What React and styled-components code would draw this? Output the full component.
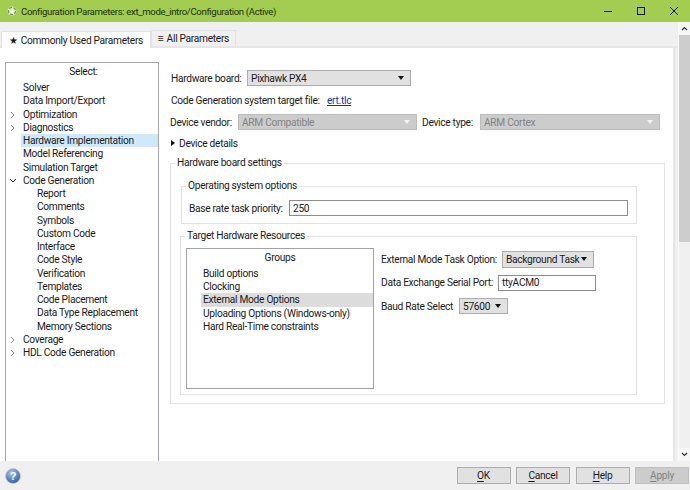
import React from 'react'
import styled, { createGlobalStyle } from 'styled-components'

const GlobalStyle = createGlobalStyle`
  html, body { margin: 0; padding: 0; background: #f0f0f0; }
  body { font-family: Roboto, "Noto Sans", sans-serif; font-size: 10.2px; letter-spacing: -0.3px; color: #1a1a1a; }
`

const Window = styled.div`
  width: 690px;
  height: 490px;
  display: flex;
  flex-direction: column;
  overflow: hidden;
  background: #f0f0f0;
`

const TitleBar = styled.div`
  height: 22px;
  flex: none;
  display: flex;
  align-items: center;
  background: #a2cd50;
  padding-left: 6px;
  gap: 3px;
`
const TitleText = styled.span`
  flex: 1;
  color: #20300c;
  font-size: 9.6px;
  letter-spacing: -0.35px;
`
const WinButtons = styled.div`
  display: flex;
  align-items: center;
`
const WinButton = styled.div`
  width: 33px;
  height: 22px;
  display: flex;
  align-items: center;
  justify-content: center;
  svg { display: block; }
`

const Middle = styled.div`
  flex: 1;
  display: flex;
  min-height: 0;
`
const Main = styled.div`
  flex: 1;
  display: flex;
  flex-direction: column;
  min-width: 0;
`
const TabBar = styled.div`
  height: 26px;
  flex: none;
  display: flex;
  align-items: flex-end;
  padding-left: 1px;
  box-sizing: border-box;
  border-bottom: 2px solid #e6e6e6;
`
const Tab = styled.div`
  box-sizing: border-box;
  width: ${p => p.$w}px;
  height: ${p => (p.$active ? 17 : 16)}px;
  margin-bottom: ${p => (p.$active ? -2 : 0)}px;
  display: flex;
  align-items: center;
  justify-content: center;
  gap: 3px;
  background: ${p => (p.$active ? '#fff' : '#f0f0f0')};
  border: 1px solid #e2e2e2;
  border-bottom: none;
  white-space: nowrap;
`
const Body = styled.div`
  flex: 1;
  display: flex;
  min-height: 0;
  background: #fff;
  margin-right: 3px;
  border-right: 2px solid #e6e6e6;
  padding-left: 5px;
`
const Tree = styled.div`
  width: 154px;
  flex: none;
  box-sizing: border-box;
  margin-top: 14px;
  border: 1px solid #a5a8ae;
  border-bottom: none;
  padding-top: 2px;
`
const TreeHeader = styled.div`
  text-align: center;
  height: 14px;
  line-height: 14px;
  margin-bottom: 2px;
  padding-left: 3px;
`
const TreeRow = styled.div`
  height: 13.25px;
  line-height: 13.25px;
  display: flex;
  align-items: center;
  padding-left: ${p => (p.$sub ? 31 : 17)}px;
  position: relative;
  background: ${p => (p.$selected ? 'linear-gradient(#cfe8fb,#cfe8fb) 15px 0 / 100% 100% no-repeat' : 'none')};
  white-space: nowrap;
`
const Caret = styled.svg`
  position: absolute;
  left: ${p => p.$left}px;
  top: 3px;
`

const Pane = styled.div`
  flex: 1;
  min-width: 0;
  padding: 22px 0 0 11px;
`
const Row = styled.div`
  display: flex;
  align-items: center;
  white-space: nowrap;
  height: 16px;
  margin-bottom: ${p => p.$mb || 0}px;
`
const Label = styled.span`
  flex: none;
  width: ${p => (p.$w ? `${p.$w}px` : 'auto')};
  margin-left: ${p => p.$ml || 0}px;
`
const Select = styled.div`
  box-sizing: border-box;
  width: ${p => p.$w}px;
  height: ${p => p.$h || 16}px;
  display: flex;
  align-items: center;
  justify-content: space-between;
  padding: 0 6px 0 3px;
  flex: none;
  background: ${p => (p.$disabled ? '#cccccc' : '#e1e1e1')};
  color: ${p => (p.$disabled ? '#838383' : '#1a1a1a')};
  border: 1px solid ${p => (p.$disabled ? '#bdbdbd' : '#adadad')};
`
const Arrow = styled.i`
  width: 0;
  height: 0;
  border-left: 3.5px solid transparent;
  border-right: 3.5px solid transparent;
  border-top: 4px solid ${p => (p.$disabled ? '#f4f4f4' : '#111')};
`
const Link = styled.a`
  color: #0b34b0;
  text-decoration: underline;
`
const Disclosure = styled.i`
  width: 0;
  height: 0;
  margin-left: 1px;
  margin-right: 4px;
  border-top: 3.5px solid transparent;
  border-bottom: 3.5px solid transparent;
  border-left: 4px solid #111;
`
const Group = styled.fieldset`
  box-sizing: border-box;
  margin: ${p => p.$m || 0};
  width: ${p => p.$w}px;
  height: ${p => p.$h}px;
  border: 1px solid #e3e3e3;
  padding: ${p => p.$pad || 0};
  min-width: 0;
`
const Legend = styled.legend`
  padding: 0 2px;
  margin-left: ${p => p.$ml}px;
  line-height: 14px;
`
const Input = styled.div`
  box-sizing: border-box;
  width: ${p => p.$w}px;
  height: 16px;
  flex: none;
  display: flex;
  align-items: center;
  padding-left: 3px;
  background: #fff;
  border: 1px solid #8d8d8d;
`
const Resources = styled.div`
  display: flex;
`
const GroupList = styled.div`
  box-sizing: border-box;
  width: 188px;
  height: 141px;
  flex: none;
  border: 1px solid #a0a3aa;
  padding-top: 2px;
`
const GroupHeader = styled.div`
  text-align: center;
  height: 14px;
  line-height: 14px;
  margin-bottom: 2px;
`
const GroupItem = styled.div`
  height: 13.2px;
  line-height: 13.2px;
  padding-left: 16px;
  white-space: nowrap;
  ${p => p.$selected && 'background: linear-gradient(#dcdcdc,#dcdcdc) 14px 0 / 100% 100% no-repeat;'}
`
const Options = styled.div`
  padding: 3px 0 0 7px;
  display: flex;
  flex-direction: column;
  gap: 7.5px;
`

const ScrollBar = styled.div`
  width: 12px;
  flex: none;
  box-sizing: border-box;
  border-left: 1px solid #fbfbfb;
  background: #f0f0f0;
  display: flex;
  flex-direction: column;
`
const ScrollBtn = styled.div`
  height: 13px;
  flex: none;
  display: flex;
  align-items: center;
  justify-content: center;
  background: #f6f6f6;
`
const Thumb = styled.div`
  height: 207px;
  flex: none;
  background: #cdcdcd;
`
const Gap = styled.div`
  flex: 1;
`

const Footer = styled.div`
  height: 29px;
  flex: none;
  display: flex;
  align-items: center;
  padding: 0 1px 0 5px;
  gap: 5.5px;
`
const HelpIcon = styled.svg`
  margin-right: auto;
  display: block;
`
const Button = styled.div`
  box-sizing: border-box;
  width: 54px;
  height: 17px;
  display: flex;
  align-items: center;
  justify-content: center;
  background: ${p => (p.$disabled ? '#cccccc' : '#e1e1e1')};
  color: ${p => (p.$disabled ? '#838383' : '#1a1a1a')};
  border: 1px solid ${p => (p.$disabled ? '#bfbfbf' : '#adadad')};
  u { text-underline-offset: 2px; }
`

const treeItems = [
  { label: 'Solver' },
  { label: 'Data Import/Export' },
  { label: 'Optimization', caret: 'right' },
  { label: 'Diagnostics', caret: 'right' },
  { label: 'Hardware Implementation', selected: true },
  { label: 'Model Referencing' },
  { label: 'Simulation Target' },
  { label: 'Code Generation', caret: 'down' },
  { label: 'Report', sub: true },
  { label: 'Comments', sub: true },
  { label: 'Symbols', sub: true },
  { label: 'Custom Code', sub: true },
  { label: 'Interface', sub: true },
  { label: 'Code Style', sub: true },
  { label: 'Verification', sub: true },
  { label: 'Templates', sub: true },
  { label: 'Code Placement', sub: true },
  { label: 'Data Type Replacement', sub: true },
  { label: 'Memory Sections', sub: true },
  { label: 'Coverage', caret: 'right' },
  { label: 'HDL Code Generation', caret: 'right' },
]

const groups = ['Build options', 'Clocking', 'External Mode Options', 'Uploading Options (Windows-only)', 'Hard Real-Time constraints']

const Scroller = () => (
  <ScrollBar>
    <ScrollBtn>
      <svg width="7" height="5" viewBox="0 0 7 5"><path d="M1 4l2.5-2.5L6 4" fill="none" stroke="#333" strokeWidth="1.2" /></svg>
    </ScrollBtn>
    <Thumb />
    <Gap />
    <ScrollBtn>
      <svg width="7" height="5" viewBox="0 0 7 5"><path d="M1 1l2.5 2.5L6 1" fill="none" stroke="#333" strokeWidth="1.2" /></svg>
    </ScrollBtn>
  </ScrollBar>
)

const App = () => (
  <>
    <GlobalStyle />
    <Window>
      <TitleBar>
        <svg width="12" height="12" viewBox="0 0 12 12">
          <circle cx="6" cy="6" r="4.5" fill="#dcebc4" />
          <circle cx="6" cy="6" r="3.6" fill="none" stroke="#6f8f55" strokeWidth="1.2" strokeDasharray="3 1.5" />
          <circle cx="6.5" cy="6.5" r="1.4" fill="#f4f8ec" />
        </svg>
        <TitleText>Configuration Parameters: ext_mode_intro/Configuration (Active)</TitleText>
        <WinButtons>
          <WinButton>
            <svg width="10" height="10" viewBox="0 0 10 10"><path d="M1 5.5h8" stroke="#111" strokeWidth="1" /></svg>
          </WinButton>
          <WinButton>
            <svg width="10" height="10" viewBox="0 0 10 10"><rect x="1.5" y="1.5" width="7" height="7" fill="none" stroke="#111" strokeWidth="1" /></svg>
          </WinButton>
          <WinButton>
            <svg width="10" height="10" viewBox="0 0 10 10"><path d="M1 1l8 8M9 1l-8 8" stroke="#111" strokeWidth="1" /></svg>
          </WinButton>
        </WinButtons>
      </TitleBar>
      <Middle>
        <Main>
          <TabBar>
            <Tab $w={150} $active><span>★</span> Commonly Used Parameters</Tab>
            <Tab $w={85}><span>≡</span> All Parameters</Tab>
          </TabBar>
          <Body>
            <Tree>
              <TreeHeader>Select:</TreeHeader>
              {treeItems.map(item => (
                <TreeRow key={item.label} $sub={item.sub} $selected={item.selected}>
                  {item.caret === 'right' && (
                    <Caret $left={4} width="6" height="8" viewBox="0 0 6 8"><path d="M1 1l3 3-3 3" fill="none" stroke="#8a8a8a" /></Caret>
                  )}
                  {item.caret === 'down' && (
                    <Caret $left={3} width="8" height="8" viewBox="0 0 8 8"><path d="M1 2l3 3 3-3" fill="none" stroke="#333" /></Caret>
                  )}
                  {item.label}
                </TreeRow>
              ))}
            </Tree>
            <Pane>
              <Row $mb={6}>
                <Label $w={76} $ml={1}>Hardware board:</Label>
                <Select $w={164}>Pixhawk PX4<Arrow /></Select>
              </Row>
              <Row $mb={6}>
                <Label $w={156} $ml={1}>Code Generation system target file:</Label>
                <Link>ert.tlc</Link>
              </Row>
              <Row $mb={5}>
                <Label $w={68}>Device vendor:</Label>
                <Select $w={179} $disabled>ARM Compatible<Arrow $disabled /></Select>
                <Label $w={58} $ml={5}>Device type:</Label>
                <Select $w={180} $disabled>ARM Cortex<Arrow $disabled /></Select>
              </Row>
              <Row $mb={5}>
                <Disclosure />
                Device details
              </Row>
              <Group $w={495} $h={248} $pad="0 0 0 10px">
                <Legend $ml={-6}>Hardware board settings</Legend>
                <Group $w={456} $h={45} $m="9px 0 0 0" $pad="7px 0 0 7px">
                  <Legend $ml={-3}>Operating system options</Legend>
                  <Row>
                    <Label $w={100}>Base rate task priority:</Label>
                    <Input $w={339}>250</Input>
                  </Row>
                </Group>
                <Group $w={457} $h={166} $m="5px 0 0 -1px" $pad="5px 0 0 5px">
                  <Legend $ml={-1}>Target Hardware Resources</Legend>
                  <Resources>
                    <GroupList>
                      <GroupHeader>Groups</GroupHeader>
                      {groups.map((g, i) => (
                        <GroupItem key={g} $selected={i === 2}>{g}</GroupItem>
                      ))}
                    </GroupList>
                    <Options>
                      <Row>
                        <Label $w={121}>External Mode Task Option:</Label>
                        <Select $w={92} $h={17}>Background Task<Arrow /></Select>
                      </Row>
                      <Row>
                        <Label $w={117}>Data Exchange Serial Port:</Label>
                        <Input $w={98}>ttyACM0</Input>
                      </Row>
                      <Row>
                        <Label $w={78}>Baud Rate Select</Label>
                        <Select $w={49}>57600<Arrow /></Select>
                      </Row>
                    </Options>
                  </Resources>
                </Group>
              </Group>
            </Pane>
          </Body>
        </Main>
        <Scroller />
      </Middle>
      <Footer>
        <HelpIcon width="16" height="16" viewBox="0 0 16 16">
          <defs>
            <radialGradient id="helpBall" cx="40%" cy="30%" r="75%">
              <stop offset="0" stopColor="#a9c4e6" />
              <stop offset="1" stopColor="#2c5a9e" />
            </radialGradient>
          </defs>
          <circle cx="8" cy="8" r="7.5" fill="url(#helpBall)" stroke="#c5cbd4" strokeWidth="0.8" />
          <text x="8" y="12" textAnchor="middle" fontSize="11" fontWeight="bold" fill="#fff" fontFamily="Liberation Sans, sans-serif">?</text>
        </HelpIcon>
        <Button><u>O</u>K</Button>
        <Button><u>C</u>ancel</Button>
        <Button><u>H</u>elp</Button>
        <Button $disabled><u>A</u>pply</Button>
      </Footer>
    </Window>
  </>
)

export default App
